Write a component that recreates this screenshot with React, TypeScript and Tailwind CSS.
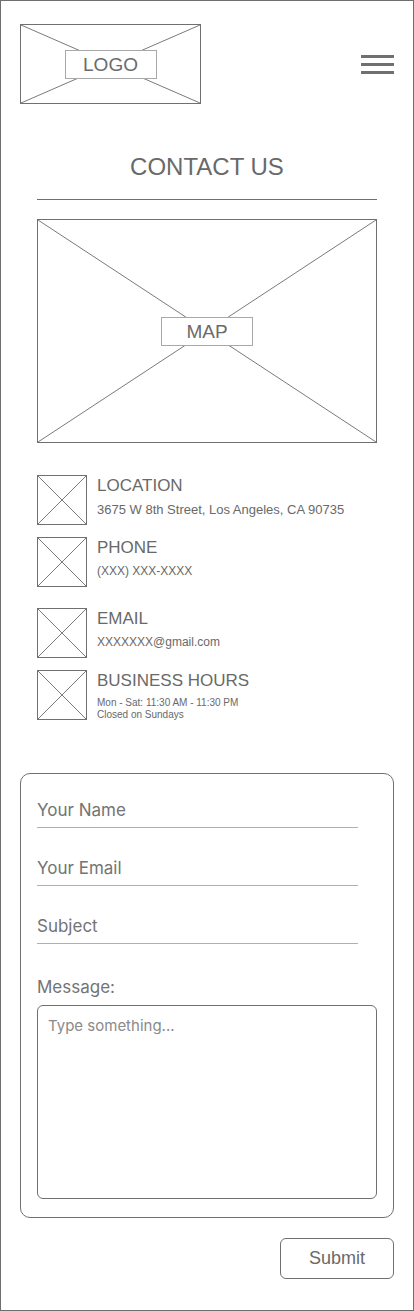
import React from "react";

const sans = { fontFamily: '"Liberation Sans", Arial, sans-serif' };
const ui = { fontFamily: 'Inter, "Noto Sans", sans-serif' };

// box with an X drawn corner to corner (wireframe placeholder)
function Crossed({ className, children }: { className: string; children?: React.ReactNode }) {
  return (
    <div className={`relative flex items-center justify-center border border-[#707070] ${className}`}>
      <svg className="absolute inset-0 h-full w-full" preserveAspectRatio="none" viewBox="0 0 100 100">
        <line x1="0" y1="0" x2="100" y2="100" stroke="#7a7a7a" strokeWidth="1" vectorEffect="non-scaling-stroke" />
        <line x1="100" y1="0" x2="0" y2="100" stroke="#7a7a7a" strokeWidth="1" vectorEffect="non-scaling-stroke" />
      </svg>
      {children}
    </div>
  );
}

function Label({ text }: { text: string }) {
  return (
    <div className="relative flex h-[29px] w-[92px] items-center justify-center border border-[#a8a8a8] bg-white text-[19px] leading-none text-[#6b6b6b]">
      {text}
    </div>
  );
}

const infos = [
  { title: "LOCATION", lines: ["3675 W 8th Street, Los Angeles, CA 90735"], size: "text-[13px] leading-[16px]", mt: "mt-0" },
  { title: "PHONE", lines: ["(XXX) XXX-XXXX"], size: "text-[12px] leading-[15px]", mt: "mt-[12px]" },
  { title: "EMAIL", lines: ["XXXXXXX@gmail.com"], size: "text-[12px] leading-[15px]", mt: "mt-[21px]" },
  {
    title: "BUSINESS HOURS",
    lines: ["Mon - Sat: 11:30 AM - 11:30 PM", "Closed on Sundays"],
    size: "text-[10px] leading-[12px]",
    mt: "mt-[12px]",
  },
];

export default function App() {
  return (
    <div className="flex h-[1311px] w-[414px] flex-col border border-[#6e6e6e] bg-white text-[#696969]" style={sans}>
      {/* header */}
      <div className="flex items-center justify-between px-[19px] pt-[23px]">
        <Crossed className="h-[80px] w-[181px]">
          <Label text="LOGO" />
        </Crossed>
        <div className="flex w-[33px] flex-col gap-[5px]">
          <div className="h-[3px] bg-[#707070]" />
          <div className="h-[3px] bg-[#707070]" />
          <div className="h-[3px] bg-[#707070]" />
        </div>
      </div>

      <div className="flex flex-col px-[36px]">
        <h1 className="mt-[49px] text-center text-[24px] leading-[28px] font-normal">CONTACT US</h1>
        <div className="mt-[18px] border-t border-[#707070]" />

        <Crossed className="mt-[19px] h-[224px] w-full">
          <Label text="MAP" />
        </Crossed>

        <div className="mt-[32px] flex flex-col">
          {infos.map((item) => (
            <div key={item.title} className={`flex items-start gap-[10px] ${item.mt}`}>
              <Crossed className="h-[50px] w-[50px] shrink-0" />
              <div className="flex flex-col">
                <div className="text-[17px] leading-[21px]">{item.title}</div>
                <div className={`mt-[6px] ${item.size}`}>
                  {item.lines.map((l) => (
                    <div key={l}>{l}</div>
                  ))}
                </div>
              </div>
            </div>
          ))}
        </div>
      </div>

      {/* form */}
      <div className="mx-[19px] mt-[52px] flex flex-col rounded-[10px] border border-[#707070] px-[16px] pt-[26px] pb-[18px]" style={ui}>
        {["Your Name", "Your Email", "Subject"].map((p, i) => (
          <input
            key={p}
            placeholder={p}
            className={`h-[28px] w-[321px] border-b border-[#b0b0b0] bg-transparent pb-[7px] text-[17px] leading-[20px] text-[#6b6b6b] outline-none placeholder:text-[#747474] ${i > 0 ? "mt-[30px]" : ""}`}
          />
        ))}
        <label className="mt-[33px] text-[17px] leading-[20px] text-[#747474]">Message:</label>
        <textarea
          placeholder="Type something..."
          className="mt-[8px] h-[194px] w-full resize-none rounded-[6px] border border-[#707070] px-[10px] pt-[10px] text-[15px] leading-[20px] outline-none placeholder:text-[#8a8a8a]"
        />
      </div>

      <div className="mt-[20px] flex justify-end px-[19px]">
        <button className="h-[41px] w-[114px] rounded-[6px] border border-[#707070] bg-white text-[18px] text-[#696969]" style={sans}>
          Submit
        </button>
      </div>
    </div>
  );
}
